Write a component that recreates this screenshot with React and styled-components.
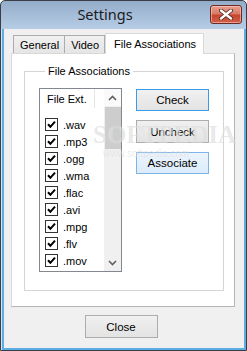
import React from 'react'
import styled, { createGlobalStyle } from 'styled-components'

const GlobalStyle = createGlobalStyle`
  html, body {
    margin: 0;
    padding: 0;
    background: #ffffff;
  }
  * {
    box-sizing: border-box;
  }
`

const Window = styled.div`
  position: relative;
  width: 247px;
  height: 351px;
  display: flex;
  flex-direction: column;
  border: 1px solid #3a3f45;
  border-radius: 5px 5px 0 0;
  padding-left: 1px;
  background: linear-gradient(#93acc9 0px, #b7cde6 28px, #d6e5f4 29px, #d6e5f4 100%);
  font-family: "Liberation Sans", Arial, sans-serif;
  font-size: 11px;
  color: #000;
  overflow: hidden;
`

const TitleBar = styled.div`
  height: 28px;
  flex: none;
  display: flex;
  align-items: flex-start;
  padding-top: 4px;
  padding-right: 4px;
`

const Title = styled.div`
  flex: 1;
  text-align: center;
  font-family: "Noto Sans", "Open Sans", sans-serif;
  font-size: 14.5px;
  line-height: 19px;
  color: #1b1b1b;
  padding-right: 2px;
`

const CloseBox = styled.div`
  width: 32px;
  height: 19px;
  border: 1px solid #6b2a22;
  border-radius: 3px;
  background: linear-gradient(#e8a291 0%, #d77a66 45%, #c7452f 55%, #d0604a 100%);
  box-shadow: inset 0 0 0 1px rgba(255, 210, 200, 0.55);
  display: flex;
  align-items: center;
  justify-content: center;
`

const Client = styled.div`
  flex: 1;
  display: flex;
  flex-direction: column;
  background: #f0f0f0;
  border: 2px solid #5aaee3;
  border-top: none;
  padding-top: 4px;
`

const TabStrip = styled.div`
  display: flex;
  align-items: flex-end;
  height: 20px;
  margin-left: 9px;
  position: relative;
  z-index: 1;
`

const Tab = styled.div`
  height: ${p => (p.$active ? '21px' : '18px')};
  margin-bottom: ${p => (p.$active ? '-1px' : '0')};
  padding: ${p => (p.$active ? '3px 7px 0 8px' : '2px 5px 0 6px')};
  border: 1px solid ${p => (p.$active ? '#d9d9d9' : '#acacac')};
  border-bottom: none;
  border-left-width: ${p => (p.$first || p.$active ? '1px' : '0')};
  background: ${p => (p.$active ? '#ffffff' : 'linear-gradient(#f0f0f0, #e5e5e5)')};
  font-size: 11px;
  line-height: 14px;
  white-space: nowrap;
`

const Panel = styled.div`
  margin: 0 9px 0 7px;
  height: 254px;
  border: 1px solid #b5b5b5;
  border-color: #d9d9d9 #b5b5b5 #b5b5b5 #d9d9d9;
  background: #ffffff;
  padding: 11px 10px 0 12px;
`

const Group = styled.fieldset`
  margin: 0;
  height: 226px;
  border: 1px solid #d5d5d5;
  padding: 10px 0 0 14px;
`

const Legend = styled.legend`
  padding: 0 3px;
  margin-left: 6px;
  font-size: 11px;
  line-height: 13px;
`

const GroupBody = styled.div`
  display: flex;
  align-items: flex-start;
  gap: 14px;
`

const ListBox = styled.div`
  width: 83px;
  height: 184px;
  border: 1px solid #828790;
  background: #ffffff;
  display: flex;
  overflow: hidden;
`

const ListMain = styled.div`
  flex: 1;
  display: flex;
  flex-direction: column;
  overflow: hidden;
`

const Header = styled.div`
  display: flex;
  height: 19px;
  flex: none;
`

const HeaderCell = styled.div`
  width: 55px;
  padding: 4px 0 0 7px;
  border-right: 1px solid #e5e5e5;
  font-size: 11px;
  line-height: 13px;
`

const Rows = styled.div`
  padding-top: 8px;
  display: flex;
  flex-direction: column;
`

const Row = styled.div`
  height: 17px;
  flex: none;
  display: flex;
  align-items: center;
  padding-left: 5px;
  gap: 5px;
  font-size: 11px;
`

const Box = styled.span`
  width: 13px;
  height: 13px;
  flex: none;
  border: 1px solid #333333;
  background: #ffffff;
  display: flex;
  align-items: center;
  justify-content: center;
`

const ScrollBar = styled.div`
  width: 17px;
  flex: none;
  display: flex;
  flex-direction: column;
  background: #f0f0f0;
`

const ArrowButton = styled.div`
  height: 17px;
  flex: none;
  display: flex;
  align-items: center;
  justify-content: center;
  background: ${p => (p.$top ? '#fafafa' : '#f0f0f0')};
`

const Track = styled.div`
  flex: 1;
  padding: 1px 0 0 0;
`

const Thumb = styled.div`
  height: 42px;
  background: #cdcdcd;
  margin: 0 0 0 1px;
`

const ButtonCol = styled.div`
  display: flex;
  flex-direction: column;
  gap: 9px;
  padding-top: 1px;
`

const Button = styled.div`
  width: ${p => p.$w || 73}px;
  height: ${p => p.$h || 22}px;
  border: 1px solid ${p => p.$border || '#adadad'};
  background: ${p => p.$bg || 'linear-gradient(#f0f0f0, #e3e3e3)'};
  display: flex;
  align-items: center;
  justify-content: center;
  font-size: 11.5px;
  color: #000;
`

const Footer = styled.div`
  display: flex;
  justify-content: center;
  padding: 8px 6px 0 0;
`

const Watermark = styled.div`
  position: absolute;
  left: 92px;
  top: 121px;
  pointer-events: none;
  font-family: "Liberation Serif", serif;
  color: rgba(140, 140, 140, 0.2);
  text-shadow: 0 0 1px rgba(255, 255, 255, 0.6);
`

const WatermarkBig = styled.div`
  font-size: 25px;
  font-weight: bold;
  line-height: 26px;
  white-space: nowrap;
`

const WatermarkSmall = styled.div`
  font-family: "Liberation Sans", sans-serif;
  font-size: 10px;
  margin-left: 10px;
  line-height: 12px;
`

const exts = ['.wav', '.mp3', '.ogg', '.wma', '.flac', '.avi', '.mpg', '.flv', '.mov', '.mkv']

function CheckMark() {
  return (
    <svg width="9" height="9" viewBox="0 0 9 9">
      <path d="M1 4.2 L3.4 6.8 L8 1.6" fill="none" stroke="#000" strokeWidth="2" />
    </svg>
  )
}

function Chevron({ up }) {
  return (
    <svg width="9" height="6" viewBox="0 0 9 6">
      <path
        d={up ? 'M1 5 L4.5 1.5 L8 5' : 'M1 1 L4.5 4.5 L8 1'}
        fill="none"
        stroke="#606060"
        strokeWidth="1.6"
      />
    </svg>
  )
}

function XGlyph() {
  return (
    <svg width="14" height="11" viewBox="0 0 14 11">
      <path d="M2 1.5 L12 9.5 M12 1.5 L2 9.5" stroke="#5a2018" strokeWidth="4" strokeLinecap="round" />
      <path d="M2 1.5 L12 9.5 M12 1.5 L2 9.5" stroke="#ffffff" strokeWidth="2.4" strokeLinecap="round" />
    </svg>
  )
}

export default function App() {
  return (
    <>
      <GlobalStyle />
      <Window>
        <TitleBar>
          <Title>Settings</Title>
          <CloseBox>
            <XGlyph />
          </CloseBox>
        </TitleBar>
        <Client>
          <TabStrip>
            <Tab $first>General</Tab>
            <Tab>Video</Tab>
            <Tab $active>File Associations</Tab>
          </TabStrip>
          <Panel>
            <Group>
              <Legend>File Associations</Legend>
              <GroupBody>
                <ListBox>
                  <ListMain>
                    <Header>
                      <HeaderCell>File Ext.</HeaderCell>
                    </Header>
                    <Rows>
                      {exts.map(ext => (
                        <Row key={ext}>
                          <Box>
                            <CheckMark />
                          </Box>
                          {ext}
                        </Row>
                      ))}
                    </Rows>
                  </ListMain>
                  <ScrollBar>
                    <ArrowButton $top>
                      <Chevron up />
                    </ArrowButton>
                    <Track>
                      <Thumb />
                    </Track>
                    <ArrowButton>
                      <Chevron />
                    </ArrowButton>
                  </ScrollBar>
                </ListBox>
                <ButtonCol>
                  <Button $border="#3c9be8" $bg="linear-gradient(#f1f1f1, #e3e3e3)">Check</Button>
                  <Button $h={23}>Uncheck</Button>
                  <Button $border="#7eb4ea" $bg="linear-gradient(#ecf4fc, #dcecfc)">Associate</Button>
                </ButtonCol>
              </GroupBody>
            </Group>
          </Panel>
          <Footer>
            <Button $h={23}>Close</Button>
          </Footer>
        </Client>
        <Watermark>
          <WatermarkBig>SOFTPEDIA</WatermarkBig>
          <WatermarkSmall>www.softpedia.com</WatermarkSmall>
        </Watermark>
      </Window>
    </>
  )
}
